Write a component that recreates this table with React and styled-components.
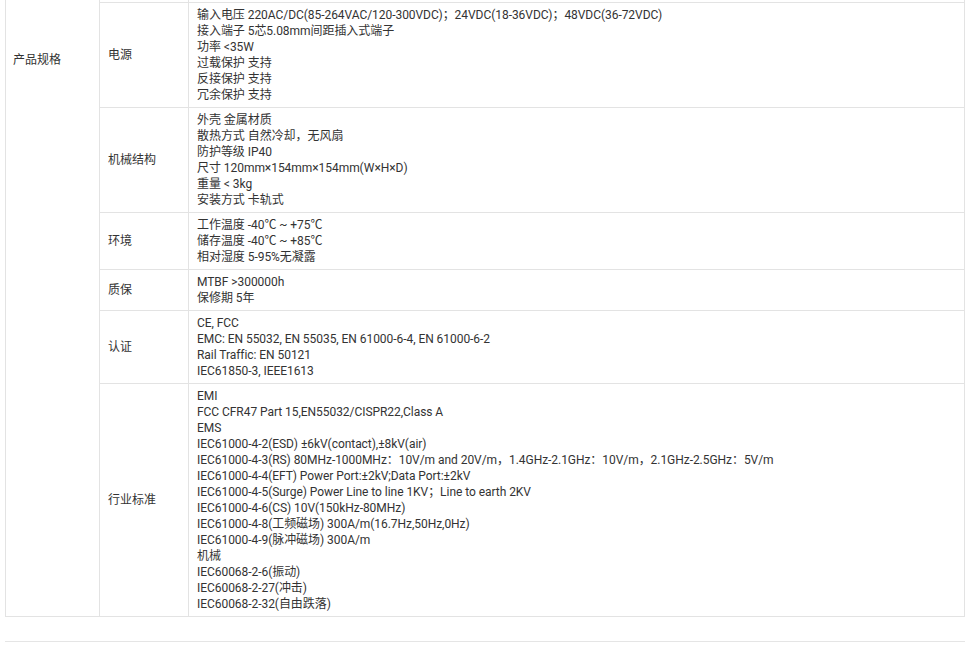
import React from "react";
import styled, { createGlobalStyle } from "styled-components";

const GlobalStyle = createGlobalStyle`
  html, body {
    margin: 0;
    padding: 0;
    background: #ffffff;
  }
  body {
    font-family: "Microsoft YaHei", Roboto, "Noto Sans CJK SC", sans-serif;
    color: #333333;
  }
`;

const Page = styled.div`
  width: 960px;
  padding: 0 0 0 5px;
  overflow: hidden;
`;

const ScrollWindow = styled.div`
  margin-top: -20px;
`;

const SpecTable = styled.table`
  width: 960px;
  border-collapse: collapse;
  table-layout: fixed;
  font-size: 12px;
  line-height: 16px;
  color: #333333;
`;

const Cell = styled.td`
  border: 1px solid #e3e3e3;
  padding: ${(p) => (p.$spacer ? "0" : "4px 8px")};
  height: ${(p) => (p.$spacer ? "21px" : "auto")};
  vertical-align: middle;
  text-align: left;
  word-break: break-word;
`;

const GroupCell = styled(Cell)`
  vertical-align: top;
  padding: 71px 8px 4px 7px;
`;

const Line = styled.div`
  white-space: nowrap;
  letter-spacing: -0.05px;
`;

const Divider = styled.div`
  width: 960px;
  height: 1px;
  margin-top: 24px;
  background: #e5e5e5;
`;

const rows = [
  {
    name: "电源",
    lines: [
      "输入电压 220AC/DC(85-264VAC/120-300VDC)；24VDC(18-36VDC)；48VDC(36-72VDC)",
      "接入端子 5芯5.08mm间距插入式端子",
      "功率 <35W",
      "过载保护 支持",
      "反接保护 支持",
      "冗余保护 支持",
    ],
  },
  {
    name: "机械结构",
    lines: [
      "外壳 金属材质",
      "散热方式 自然冷却，无风扇",
      "防护等级 IP40",
      "尺寸 120mm×154mm×154mm(W×H×D)",
      "重量 < 3kg",
      "安装方式 卡轨式",
    ],
  },
  {
    name: "环境",
    lines: [
      "工作温度 -40℃ ~ +75℃",
      "储存温度 -40℃ ~ +85℃",
      "相对湿度 5-95%无凝露",
    ],
  },
  {
    name: "质保",
    lines: ["MTBF >300000h", "保修期 5年"],
  },
  {
    name: "认证",
    lines: [
      "CE, FCC",
      "EMC: EN 55032, EN 55035, EN 61000-6-4, EN 61000-6-2",
      "Rail Traffic: EN 50121",
      "IEC61850-3, IEEE1613",
    ],
  },
  {
    name: "行业标准",
    lines: [
      "EMI",
      "FCC CFR47 Part 15,EN55032/CISPR22,Class A",
      "EMS",
      "IEC61000-4-2(ESD) ±6kV(contact),±8kV(air)",
      "IEC61000-4-3(RS) 80MHz-1000MHz：10V/m and 20V/m，1.4GHz-2.1GHz：10V/m，2.1GHz-2.5GHz：5V/m",
      "IEC61000-4-4(EFT) Power Port:±2kV;Data Port:±2kV",
      "IEC61000-4-5(Surge) Power Line to line 1KV；Line to earth 2KV",
      "IEC61000-4-6(CS) 10V(150kHz-80MHz)",
      "IEC61000-4-8(工频磁场) 300A/m(16.7Hz,50Hz,0Hz)",
      "IEC61000-4-9(脉冲磁场) 300A/m",
      "机械",
      "IEC60068-2-6(振动)",
      "IEC60068-2-27(冲击)",
      "IEC60068-2-32(自由跌落)",
    ],
  },
];

export default function App() {
  return (
    <>
      <GlobalStyle />
      <Page>
        <ScrollWindow>
          <SpecTable>
            <colgroup>
              <col style={{ width: 94 }} />
              <col style={{ width: 89 }} />
              <col />
            </colgroup>
            <tbody>
              <tr>
                <GroupCell rowSpan={rows.length + 1}>产品规格</GroupCell>
                <Cell $spacer />
                <Cell $spacer />
              </tr>
              {rows.map((r) => (
                <tr key={r.name}>
                  <Cell>{r.name}</Cell>
                  <Cell>
                    {r.lines.map((l, i) => (
                      <Line key={i}>{l}</Line>
                    ))}
                  </Cell>
                </tr>
              ))}
            </tbody>
          </SpecTable>
        </ScrollWindow>
        <Divider />
      </Page>
    </>
  );
}
